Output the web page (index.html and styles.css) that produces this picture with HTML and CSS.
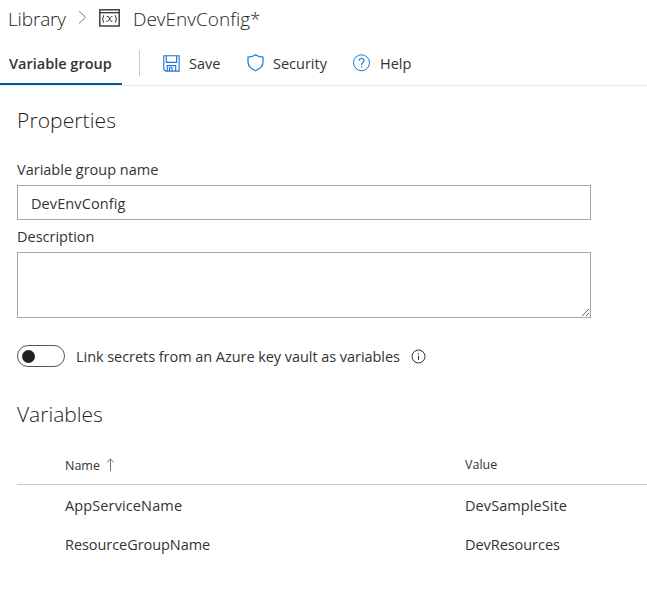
FILE: index.html
```html
<!DOCTYPE html>
<html lang="en">
<head>
<meta charset="utf-8">
<title>DevEnvConfig</title>
<link rel="stylesheet" href="styles.css">
</head>
<body>
<header class="breadcrumb">
  <span class="crumb crumb-library">Library</span>
  <svg class="chevron" width="9" height="15" viewBox="0 0 9 15"><path d="M1 1.2 7.5 7.2 1 13.5" fill="none" stroke="#5b87ad"/></svg>
  <svg class="group-icon" width="21" height="18" viewBox="0 0 21 18" fill="none" stroke="#333">
    <rect x=".8" y=".8" width="19.4" height="16.2" stroke-width="1.4"/>
    <path d="M1 3.7H20" stroke-width="1.3"/>
    <path d="M4.8 6.2Q2.4 10 4.8 13.8M16.2 6.2Q18.6 10 16.2 13.8" stroke-width="1"/>
    <path d="M7.7 7.6Q9.3 6.5 10 8.2L11.2 11.6Q11.8 13.2 13.4 12M13.5 7.4Q12.4 7 11.3 8.8L9.7 11.3Q8.6 13 7.3 12.2" stroke-width="1"/>
  </svg>
  <span class="crumb crumb-current">DevEnvConfig*</span>
</header>
<nav class="toolbar">
  <span class="tab">Variable group</span>
  <span class="divider"></span>
  <span class="command save">
    <svg width="17" height="17" viewBox="0 0 17 17" fill="none" stroke="#1777d4" stroke-width="1.1"><path d="M.8.8H16.1V16.1H2.7L.8 14.2ZM3.3.8V7.4H13.6V.8M4.2 16V10.6H12.7V16M6.5 16V12.8H9V16"/></svg>
    <span class="command-text">Save</span>
  </span>
  <span class="command security">
    <svg width="17" height="18" viewBox="0 0 17 18" fill="none" stroke="#1777d4" stroke-width="1.2"><path d="M8.5.8Q5.5 3.1 1 3.1V8Q1 13.5 8.5 16.8Q16 13.5 16 8V3.1Q11.5 3.1 8.5.8Z"/></svg>
    <span class="command-text">Security</span>
  </span>
  <span class="command help">
    <svg width="18" height="18" viewBox="0 0 18 18" fill="none" stroke="#1777d4"><circle cx="8.5" cy="8.8" r="8"/><path d="M6 6.8Q6 4.5 8.5 4.5T11 6.7Q11 7.8 9.7 8.7Q8.5 9.5 8.5 11M8.5 12.3V13.6" stroke-width="1.1"/></svg>
    <span class="command-text">Help</span>
  </span>
</nav>
<main>
  <h2 class="properties-title">Properties</h2>
  <label class="label label-name" for="name">Variable group name</label>
  <input class="name-field" id="name" type="text" value="DevEnvConfig">
  <label class="label label-desc" for="desc">Description</label>
  <textarea class="desc-field" id="desc"></textarea>
  <div class="toggle-row">
    <span class="toggle"><span class="knob"></span></span>
    <span class="toggle-text">Link secrets from an Azure key vault as variables</span>
    <svg width="15" height="15" viewBox="0 0 15 15" fill="none" stroke="#333"><circle cx="7.5" cy="7.5" r="6.5"/><path d="M7.5 6.5V11M7.5 4V5.2"/></svg>
  </div>
  <h2 class="variables-title">Variables</h2>
  <div class="grid-row grid-head">
    <span class="head-name"><span class="th-name">Name</span><svg width="8" height="13" viewBox="0 0 8 13" fill="none" stroke="#806c78"><path d="M4.5 13V1M1 4.3 4.5 1 7.8 4.3"/></svg></span>
    <span class="head-value">Value</span>
  </div>
  <div class="grid-row"><span class="app-name">AppServiceName</span><span class="app-value">DevSampleSite</span></div>
  <div class="grid-row"><span class="resource-name">ResourceGroupName</span><span class="resource-value">DevResources</span></div>
</main>
</body>
</html>
```
FILE: styles.css
```css
* { box-sizing: border-box; }
body {
  margin: 0;
  height: 589px;
  overflow: hidden;
  background: #fff;
  color: #333;
  font: 14.5px/20px "Open Sans", "Noto Sans", sans-serif;
}
svg { display: block; flex: none; }
span { white-space: nowrap; }
.breadcrumb { display: flex; height: 41px; padding-left: 8px; }
.crumb { font-size: 19px; font-weight: 300; line-height: 38px; color: #222; }
.crumb-library { width: 70px; letter-spacing: -0.15px; }
.chevron { margin-top: 10px; }
.group-icon { margin: 9px 13px 0 12px; }
.toolbar {
  display: flex;
  align-items: flex-start;
  height: 45px;
  border-bottom: 1px solid #eaeaea;
}
.tab {
  width: 122px;
  height: 44px;
  padding-left: 9px;
  line-height: 45px;
  font-weight: 600;
  border-bottom: 2px solid #005a9e;
}
.divider { width: 1px; height: 26px; margin: 9px 0 0 17px; background: #c8c8c8; }
.command { display: flex; align-items: center; gap: 9px; height: 44px; }
.command-text { padding-top: 1px; }
.save { width: 84px; margin-left: 23px; }
.security { width: 106px; }
main { padding-left: 17px; }
h2 { margin: 0; font-size: 21px; line-height: 30px; font-weight: 300; color: #222; }
.properties-title { margin-top: 19px; letter-spacing: 0.1px; }
.label { display: block; width: max-content; }
.label-name { margin-top: 25px; }
.name-field, .desc-field {
  display: block;
  width: 574px;
  border: 1px solid #a6a6a6;
  outline: 0;
  font: inherit;
  color: inherit;
}
.name-field { height: 35px; margin-top: 5px; padding: 2px 13px 0; letter-spacing: 0.1px; }
.label-desc { margin-top: 7px; }
.desc-field { height: 66px; margin-top: 5px; resize: vertical; }
.toggle-row { display: flex; align-items: center; height: 22px; margin-top: 27px; }
.toggle { display: flex; align-items: center; width: 48px; height: 22px; padding-left: 4px; border: 1px solid #555; border-radius: 11px; }
.knob { width: 13px; height: 13px; border-radius: 50%; background: #222; }
.toggle-text { width: 335px; padding: 2px 0 0 11px; letter-spacing: -0.05px; }
.toggle-row svg { margin-left: 11px; }
.variables-title { margin-top: 32px; }
.grid-row { display: grid; grid-template-columns: 400px 1fr; align-items: center; height: 39px; padding-left: 48px; }
.grid-head { height: 41px; margin-top: 15px; margin-bottom: 1px; padding-top: 1px; border-bottom: 1px solid #c8c8c8; font-size: 12.5px; }
.head-name { display: flex; align-items: center; gap: 6px; }
.th-name { padding-top: 2px; }
.app-name { letter-spacing: 0.12px; }
.app-value { letter-spacing: 0.08px; }
.resource-name { letter-spacing: -0.06px; }
.resource-value { letter-spacing: -0.05px; }
```
